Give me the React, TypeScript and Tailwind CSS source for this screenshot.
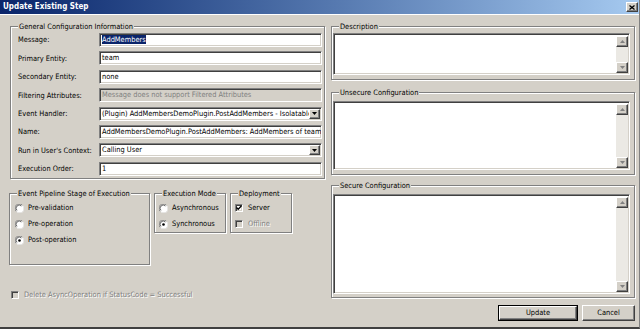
import React from "react";

const F = "font-['DejaVu_Sans_Condensed','Liberation_Sans',Arial,sans-serif]";
const sunken =
  "border border-t-[#808080] border-l-[#808080] border-b-white border-r-white shadow-[inset_1px_1px_0_#404040,inset_-1px_-1px_0_#d4d0c8]";
const raised =
  "border border-t-white border-l-white border-b-[#404040] border-r-[#404040] shadow-[inset_-1px_-1px_0_#808080,inset_1px_1px_0_#d4d0c8]";
const etched = "border border-[#808080] shadow-[inset_1px_1px_0_#fff,1px_1px_0_#fff]";
const disabledText = "text-[#808080] [text-shadow:1px_1px_0_#fff]";

function Group({
  title,
  className = "",
  children,
}: {
  title: string;
  className?: string;
  children?: React.ReactNode;
}) {
  return (
    <div className={`relative ${etched} ${className}`}>
      <span className="absolute top-[-5px] left-[7px] px-[1px] bg-[#d4d0c8] leading-[9px] whitespace-nowrap">
        {title}
      </span>
      {children}
    </div>
  );
}

function Tri({ up, color = "#000" }: { up?: boolean; color?: string }) {
  return (
    <svg width="5" height="3" viewBox="0 0 5 3">
      {up ? <polygon points="0,3 5,3 2.5,0" fill={color} /> : <polygon points="0,0 5,0 2.5,3" fill={color} />}
    </svg>
  );
}

function TextArea() {
  return (
    <div className={`flex-1 bg-white flex justify-end ${sunken}`}>
      <div className="w-[12px] my-[1px] mr-[1px] mt-[2px] flex flex-col bg-[#ebe9e4]">
        <div className={`h-[11px] flex items-center justify-center bg-[#d4d0c8] ${raised}`}>
          <Tri up color="#808080" />
        </div>
        <div className="flex-1" />
        <div className={`h-[11px] flex items-center justify-center bg-[#d4d0c8] ${raised}`}>
          <Tri color="#808080" />
        </div>
      </div>
    </div>
  );
}

function Field({
  children,
  disabled,
  combo,
}: {
  children?: React.ReactNode;
  disabled?: boolean;
  combo?: boolean;
}) {
  return (
    <div
      className={`flex-1 h-full flex items-center overflow-hidden ${sunken} ${
        disabled ? "bg-[#d4d0c8]" : "bg-white"
      }`}
    >
      <div className="flex-1 pl-[2px] whitespace-nowrap overflow-hidden leading-[10px]">{children}</div>
      {combo && (
        <div className={`w-[11px] h-[10px] mr-[1px] shrink-0 flex items-center justify-center bg-[#d4d0c8] ${raised}`}>
          <Tri />
        </div>
      )}
    </div>
  );
}

function Row({ label, children }: { label: string; children: React.ReactNode }) {
  return (
    <div className="flex items-center h-[14px]">
      <div className="w-[81px] whitespace-nowrap">{label}</div>
      {children}
    </div>
  );
}

function Radio({ checked }: { checked?: boolean }) {
  return (
    <svg width="9" height="9" viewBox="0 0 9 9" className="shrink-0">
      <circle cx="4.5" cy="4.5" r="4" fill="#fff" />
      <path d="M1.2 7.3 A4 4 0 0 1 7.3 1.2" stroke="#808080" strokeWidth="1" fill="none" />
      <path d="M2 6.4 A3 3 0 0 1 6.4 2" stroke="#404040" strokeWidth="0.8" fill="none" />
      <path d="M7.8 1.8 A4 4 0 0 1 1.8 7.8" stroke="#e8e8e8" strokeWidth="1" fill="none" />
      {checked && <circle cx="4.5" cy="4.5" r="1.3" fill="#000" />}
    </svg>
  );
}

function Check({ checked, disabled }: { checked?: boolean; disabled?: boolean }) {
  return (
    <div className={`w-[8px] h-[8px] shrink-0 flex items-center justify-center ${sunken} ${disabled ? "bg-[#d4d0c8]" : "bg-white"}`}>
      {checked && (
        <svg width="6" height="6" viewBox="0 0 6 6">
          <path d="M0.5 2.5 L2.2 4.3 L5.5 0.8" stroke="#000" strokeWidth="1.3" fill="none" />
        </svg>
      )}
    </div>
  );
}

export default function App() {
  return (
    <div
      className={`w-[640px] h-[329px] bg-[#d4d0c8] flex flex-col overflow-hidden border-r border-r-[#808080] border-b-2 border-b-[#404040] ${F} text-[7.4px] text-black`}
    >
      <div className="h-[14px] shrink-0 bg-linear-to-r from-[#0a246a] to-[#a6caf0] flex items-center justify-between pl-[3px] pr-[1px]">
        <span className="text-white font-bold text-[8px] leading-[10px]">Update Existing Step</span>
        <div className={`w-[12px] h-[10px] flex items-center justify-center bg-[#d4d0c8] ${raised}`}>
          <svg width="6" height="5" viewBox="0 0 6 5">
            <path d="M0.5 0.5 L5.5 4.5 M5.5 0.5 L0.5 4.5" stroke="#000" strokeWidth="1.3" />
          </svg>
        </div>
      </div>

      <div className="flex-1 flex pl-[10px] pt-[12px] pr-[4px] gap-[6px] border-t border-t-white">
        {/* Left column */}
        <div className="w-[315px] flex flex-col -mt-[1px]">
          <Group title="General Configuration Information" className="h-[153px] pt-[6px] pl-[7px] pr-[2px]">
            <div className="flex flex-col gap-[4.4px]">
              <Row label="Message:">
                <Field>
                  <span className="bg-[#0a246a] text-white">AddMembers</span>
                </Field>
              </Row>
              <Row label="Primary Entity:">
                <Field>team</Field>
              </Row>
              <Row label="Secondary Entity:">
                <Field>none</Field>
              </Row>
              <Row label="Filtering Attributes:">
                <Field disabled>
                  <span className="text-[#808080]">Message does not support Filtered Attributes</span>
                </Field>
              </Row>
              <Row label="Event Handler:">
                <Field combo>(Plugin) AddMembersDemoPlugin.PostAddMembers - Isolatable</Field>
              </Row>
              <Row label="Name:">
                <Field>AddMembersDemoPlugin.PostAddMembers: AddMembers of team</Field>
              </Row>
              <Row label="Run in User's Context:">
                <Field combo>Calling User</Field>
              </Row>
              <Row label="Execution Order:">
                <Field>1</Field>
              </Row>
            </div>
          </Group>

          <div className="mt-[14px] -ml-[1px] flex items-start gap-[4px]">
            <Group title="Event Pipeline Stage of Execution" className="w-[141px] h-[72px] pt-[9px] pl-[5px]">
              <div className="flex flex-col gap-[6px]">
                <div className="flex items-center gap-[4px] h-[10px]">
                  <Radio />
                  <span>Pre-validation</span>
                </div>
                <div className="flex items-center gap-[4px] h-[10px]">
                  <Radio />
                  <span>Pre-operation</span>
                </div>
                <div className="flex items-center gap-[4px] h-[10px]">
                  <Radio checked />
                  <span>Post-operation</span>
                </div>
              </div>
            </Group>
            <Group title="Execution Mode" className="w-[72px] h-[40px] pt-[9px] pl-[4px]">
              <div className="flex flex-col gap-[6px]">
                <div className="flex items-center gap-[4px] h-[10px]">
                  <Radio />
                  <span>Asynchronous</span>
                </div>
                <div className="flex items-center gap-[4px] h-[10px]">
                  <Radio checked />
                  <span>Synchronous</span>
                </div>
              </div>
            </Group>
            <Group title="Deployment" className="w-[62px] h-[40px] pt-[9px] pl-[4px]">
              <div className="flex flex-col gap-[6px]">
                <div className="flex items-center gap-[5px] h-[10px]">
                  <Check checked />
                  <span>Server</span>
                </div>
                <div className="flex items-center gap-[5px] h-[10px]">
                  <Check disabled />
                  <span className={disabledText}>Offline</span>
                </div>
              </div>
            </Group>
          </div>

          <div className="mt-[25px] ml-[1px] flex items-center gap-[5px] h-[10px]">
            <Check disabled />
            <span className={disabledText}>Delete AsyncOperation if StatusCode = Successful</span>
          </div>
        </div>

        {/* Right column */}
        <div className="flex-1 flex flex-col -mt-[1px]">
          <Group title="Description" className="h-[54px] pt-[6px] pl-[1px] pr-[4px] pb-[4px] flex">
            <TextArea />
          </Group>
          <Group title="Unsecure Configuration" className="mt-[12px] h-[83px] pt-[8px] pl-[1px] pr-[4px] pb-[4px] flex">
            <TextArea />
          </Group>
          <Group title="Secure Configuration" className="mt-[10px] h-[113px] pt-[8px] pl-[1px] pr-[4px] pb-[3px] flex">
            <TextArea />
          </Group>
          <div className="mt-[7px] flex justify-end gap-[4px]">
            <div className="w-[80px] h-[16px] border border-black">
              <div className={`w-full h-full flex items-center justify-center bg-[#d4d0c8] ${raised}`}>Update</div>
            </div>
            <div className={`w-[53px] h-[16px] flex items-center justify-center bg-[#d4d0c8] ${raised}`}>Cancel</div>
          </div>
        </div>
      </div>
    </div>
  );
}
